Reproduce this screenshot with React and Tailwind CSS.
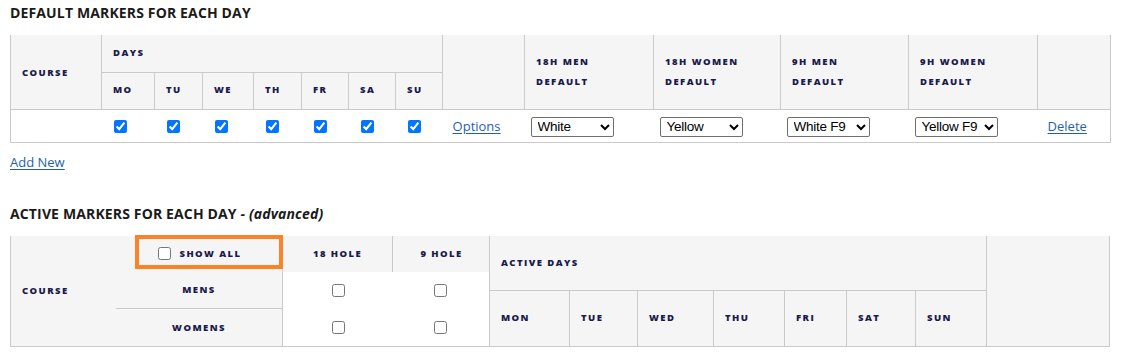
import { useState } from "react";

const days1 = [
    { label: "MO", w: "w-[53px]" },
    { label: "TU", w: "w-[48px]" },
    { label: "WE", w: "w-[51px]" },
    { label: "TH", w: "w-[48px]" },
    { label: "FR", w: "w-[47px]" },
    { label: "SA", w: "w-[47px]" },
    { label: "SU", w: "w-[47px]" },
];

const defaults = [
    { top: "18H MEN", value: "White", options: ["White", "Yellow", "Red"] },
    { top: "18H WOMEN", value: "Yellow", options: ["White", "Yellow", "Red"] },
    { top: "9H MEN", value: "White F9", options: ["White F9", "Yellow F9", "Red F9"] },
    { top: "9H WOMEN", value: "Yellow F9", options: ["White F9", "Yellow F9", "Red F9"] },
];

const activeDays = [
    { label: "MON", w: "w-[79px]" },
    { label: "TUE", w: "w-[68px]" },
    { label: "WED", w: "w-[76px]" },
    { label: "THU", w: "w-[71px]" },
    { label: "FRI", w: "w-[62px]" },
    { label: "SAT", w: "w-[69px]" },
    { label: "SUN", w: "w-[71px]" },
];

const th = "text-[9.5px] font-extrabold tracking-[0.15em] text-[#1b1a4c] uppercase";
const link = "text-[13px] text-[#1f5fad] underline underline-offset-2";

function MarkerSelect({ value, options }) {
    const [v, setV] = useState(value);
    return (
        <select
            value={v}
            onChange={(e) => setV(e.target.value)}
            className="w-[83px] h-[20px] bg-white border border-[#6f6f6f] rounded-[2px] text-[13.5px] tracking-[-0.02em] text-black pl-[2px] font-['Liberation_Sans',Arial,sans-serif]"
        >
            {options.map((o) => (
                <option key={o}>{o}</option>
            ))}
        </select>
    );
}

function Box({ checked }) {
    return (
        <input
            type="checkbox"
            defaultChecked={checked}
            className="m-0 w-[13px] h-[13px] align-middle"
        />
    );
}

export default function App() {
    return (
        <div className="w-[1125px] h-[355px] bg-white font-['Open_Sans',sans-serif] text-[#1a1a1a] overflow-hidden">
            <h2 className="pl-[10px] pt-[2px] h-[35px] text-[14px] font-bold tracking-[0.01em]">
                DEFAULT MARKERS FOR EACH DAY
            </h2>

            <table className="ml-[10px] w-[1100px] table-fixed border-collapse border-l border-r border-b border-[#cacaca]">
                <colgroup>
                    <col className="w-[91px]" />
                    {days1.map((d) => (
                        <col key={d.label} className={d.w} />
                    ))}
                    <col className="w-[82px]" />
                    <col className="w-[129px]" />
                    <col className="w-[127px]" />
                    <col className="w-[128px]" />
                    <col className="w-[129px]" />
                    <col className="w-[73px]" />
                </colgroup>
                <thead className="bg-[#f5f5f5]">
                    <tr className="h-[37px]">
                        <th rowSpan={2} className={`${th} text-left pl-[11px] pt-[2px]`}>
                            COURSE
                        </th>
                        <th colSpan={7} className={`${th} text-left pl-[11px] border-l border-b border-[#cacaca]`}>
                            DAYS
                        </th>
                        <th rowSpan={2} className="border-l border-[#cacaca]" />
                        {defaults.map((d) => (
                            <th
                                key={d.top}
                                rowSpan={2}
                                className={`${th} text-left pl-[11px] leading-[20px] border-l border-[#cacaca]`}
                            >
                                {d.top}
                                <br />
                                DEFAULT
                            </th>
                        ))}
                        <th rowSpan={2} className="border-l border-[#cacaca]" />
                    </tr>
                    <tr className="h-[37px]">
                        {days1.map((d) => (
                            <th key={d.label} className={`${th} text-left pl-[11px] border-l border-[#cacaca]`}>
                                {d.label}
                            </th>
                        ))}
                    </tr>
                </thead>
                <tbody>
                    <tr className="h-[33px] border-t border-[#cacaca]">
                        <td />
                        {days1.map((d) => (
                            <td key={d.label} className="pl-[12px] pb-[1px]">
                                <Box checked />
                            </td>
                        ))}
                        <td className="pl-[10px] pb-[2px]">
                            <a href="#" className={link}>
                                Options
                            </a>
                        </td>
                        {defaults.map((d) => (
                            <td key={d.top} className="pl-[6px] pb-[1px]">
                                <MarkerSelect value={d.value} options={d.options} />
                            </td>
                        ))}
                        <td className="pl-[10px] pb-[2px]">
                            <a href="#" className={link}>
                                Delete
                            </a>
                        </td>
                    </tr>
                </tbody>
            </table>

            <div className="pl-[10px] h-[52px] pt-[6px]">
                <a href="#" className={link}>
                    Add New
                </a>
            </div>

            <h2 className="pl-[10px] h-[41px] pt-[8px] text-[14px] font-bold tracking-[0.01em]">
                ACTIVE MARKERS FOR EACH DAY <span className="italic">- (advanced)</span>
            </h2>

            <div className="ml-[10px] w-[1100px] h-[111px] flex border-l border-r border-b border-[#cacaca]">
                <div className={`${th} w-[105px] bg-[#f5f5f5] flex items-center pl-[11px] pt-[2px]`}>
                    COURSE
                </div>

                <div className="w-[166px] flex flex-col bg-[#f5f5f5]">
                    <div className="relative h-[36px] flex items-center justify-center gap-[8px] pl-[2px]">
                        <Box />
                        <span className={`${th} pt-[2px]`}>SHOW ALL</span>
                        <div className="absolute left-[19px] top-[-1px] w-[148px] h-[34px] border-[4px] border-[#fb8227] z-10 pointer-events-none" />
                    </div>
                    <div className={`${th} h-[36px] flex items-center justify-center pt-[2px]`}>MENS</div>
                    <div className={`${th} h-[38px] flex items-center justify-center pt-[2px] border-t border-[#cacaca]`}>
                        WOMENS
                    </div>
                </div>

                <div className="w-[207px] border-l border-[#cacaca] grid grid-cols-[109px_98px] grid-rows-[36px_37px_37px]">
                    <div className={`${th} bg-[#f5f5f5] flex items-center justify-center pt-[2px]`}>18 HOLE</div>
                    <div className={`${th} bg-[#f5f5f5] flex items-center justify-center pt-[2px] border-l border-[#cacaca]`}>
                        9 HOLE
                    </div>
                    <div className="flex items-center justify-center pl-[2px]">
                        <Box />
                    </div>
                    <div className="flex items-center justify-center pr-[2px]">
                        <Box />
                    </div>
                    <div className="flex items-center justify-center pl-[2px]">
                        <Box />
                    </div>
                    <div className="flex items-center justify-center pr-[2px]">
                        <Box />
                    </div>
                </div>

                <div className="w-[497px] border-l border-[#cacaca] flex flex-col bg-[#f5f5f5]">
                    <div className={`${th} h-[55px] flex items-center pl-[11px] pt-[2px] border-b border-[#cacaca]`}>
                        ACTIVE DAYS
                    </div>
                    <div className="flex flex-1">
                        {activeDays.map((d, i) => (
                            <div
                                key={d.label}
                                className={`${th} ${d.w} flex items-center pl-[11px] ${i > 0 ? "border-l border-[#cacaca]" : ""}`}
                            >
                                {d.label}
                            </div>
                        ))}
                    </div>
                </div>

                <div className="flex-1 border-l border-[#cacaca] bg-[#f5f5f5]" />
            </div>
        </div>
    );
}
